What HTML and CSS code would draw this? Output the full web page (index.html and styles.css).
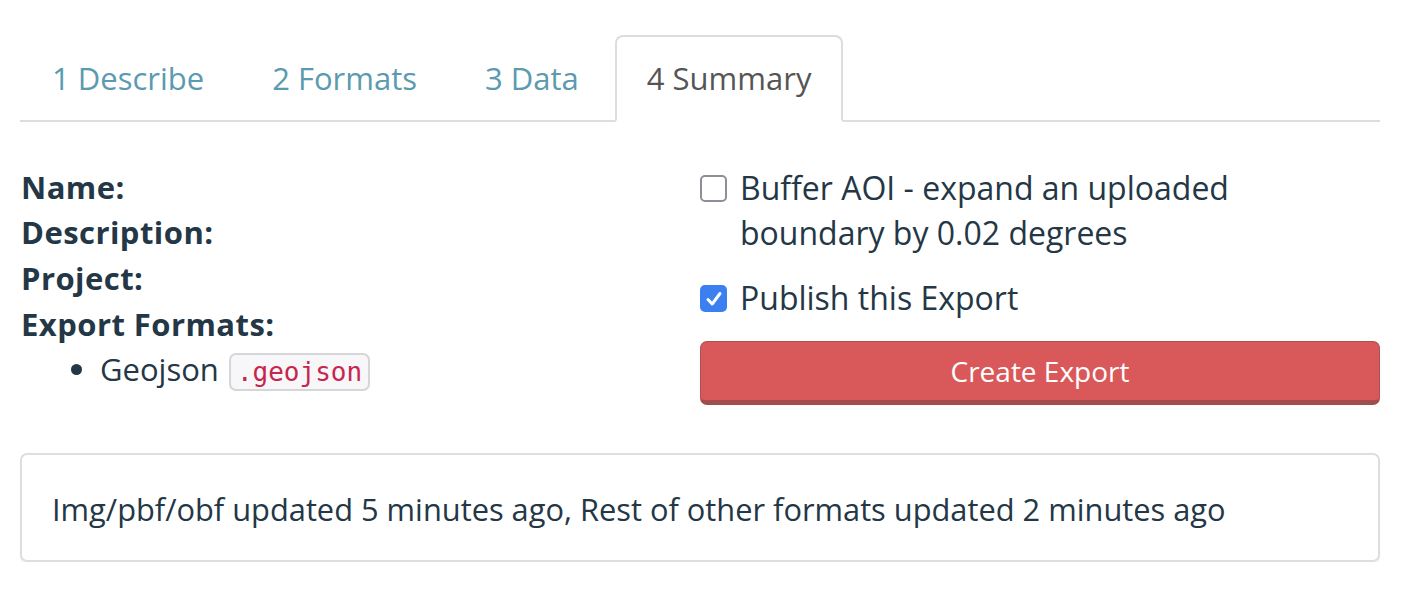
FILE: index.html
```html
<!DOCTYPE html>
<html lang="en">
<head>
<meta charset="utf-8">
<title>Export Summary</title>
<link rel="stylesheet" href="styles.css">
</head>
<body>
<div class="page">
  <ul class="tabs">
    <li class="tab"><a class="tab-link">1 Describe</a></li>
    <li class="tab"><a class="tab-link">2 Formats</a></li>
    <li class="tab"><a class="tab-link">3 Data</a></li>
    <li class="tab active"><a class="tab-link">4 Summary</a></li>
  </ul>

  <div class="summary">
    <div class="col-left">
      <div class="label">Name:</div>
      <div class="label">Description:</div>
      <div class="label">Project:</div>
      <div class="label">Export Formats:</div>
      <ul class="formats">
        <li>Geojson <code class="ext">.geojson</code></li>
      </ul>
    </div>
    <div class="col-right">
      <label class="check">
        <span class="box"></span>
        <span class="check-text">Buffer AOI - expand an uploaded boundary by 0.02 degrees</span>
      </label>
      <label class="check checked">
        <span class="box">
          <svg viewBox="0 0 26 26" width="26" height="26"><path d="M7 13.5 L11.2 18 L19 7.5" fill="none" stroke="#fff" stroke-width="3" stroke-linecap="round" stroke-linejoin="round"/></svg>
        </span>
        <span class="check-text">Publish this Export</span>
      </label>
      <button class="btn-create" type="button">Create Export</button>
    </div>
  </div>

  <div class="panel">Img/pbf/obf updated 5 minutes ago, Rest of other formats updated 2 minutes ago</div>
</div>
</body>
</html>
```

FILE: styles.css
```css
* { box-sizing: border-box; }

html, body {
  margin: 0;
  padding: 0;
  background: #fff;
}

body {
  font-family: "Open Sans", "Noto Sans", sans-serif;
  font-size: 31px;
  color: #243746;
}

.page {
  padding: 35px 30px 0 20px;
  width: 1410px;
}

.tabs {
  list-style: none;
  margin: 0;
  padding: 0;
  display: flex;
  border-bottom: 2px solid #ddd;
}

.tab {
  margin-right: 4px;
  margin-bottom: -2px;
}

.tab-link {
  display: block;
  padding: 20px 30px;
  font-size: 31px;
  line-height: 42.86px;
  border: 2px solid transparent;
  border-radius: 8px 8px 0 0;
  color: #5b9aaf;
}

.tab.active .tab-link {
  color: #555;
  background: #fff;
  border-color: #ddd;
  border-bottom-color: transparent;
}

.summary {
  display: grid;
  grid-template-columns: 680px 680px;
  margin-top: 43px;
}

.label {
  font-weight: 700;
  line-height: 45.6px;
  letter-spacing: 0.45px;
  padding-left: 1px;
}

.formats {
  margin: 0;
  padding-left: 80px;
  line-height: 45.6px;
}

.ext {
  font-family: "DejaVu Sans Mono", "Liberation Mono", monospace;
  font-size: 26px;
  color: #c7254e;
  background: #f7f7f9;
  border: 2px solid #d6d6d9;
  border-radius: 7px;
  padding: 2px 6px;
  margin-left: 2px;
}

.col-right {
  display: flex;
  flex-direction: column;
}

.check {
  display: flex;
  align-items: flex-start;
  gap: 13px;
  font-size: 32px;
  line-height: 45.6px;
  margin-bottom: 19px;
}

.check-text {
  max-width: 600px;
}

.box {
  flex: none;
  width: 27px;
  height: 27px;
  margin-top: 10px;
  border: 2.5px solid #8f8d97;
  border-radius: 5px;
  background: #fff;
  display: flex;
  align-items: center;
  justify-content: center;
}

.check.checked .box {
  border: none;
  background: #3b7ff0;
}

.btn-create {
  height: 64px;
  width: 680px;
  font-family: "Open Sans", "Noto Sans", sans-serif;
  font-size: 28px;
  color: #fff;
  background: #d9595b;
  border: 1.5px solid #b24f52;
  border-bottom: 5px solid #a14c4f;
  border-radius: 7px;
  padding: 0;
  margin-top: 1px;
}

.panel {
  margin-top: 48px;
  border: 2px solid #dedede;
  border-radius: 7px;
  box-shadow: 0 2px 2px rgba(0, 0, 0, 0.05);
  padding: 32px 30px 28px;
  font-size: 30.8px;
  line-height: 45.6px;
}
```
